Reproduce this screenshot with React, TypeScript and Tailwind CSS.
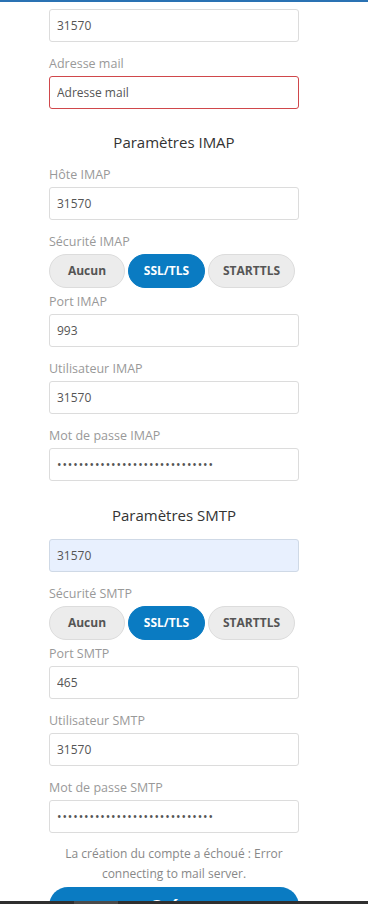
import { useState } from "react";

const font = { fontFamily: '"Open Sans", "Noto Sans", Arial, sans-serif' };

const Label = ({ text, className = "" }: { text: string; className?: string }) => (
  <label className={`block h-[20px] leading-[20px] text-[12.5px] text-[#999] ${className}`}>{text}</label>
);

const Field = ({
  value,
  placeholder,
  type = "text",
  variant = "normal",
  className = "",
}: {
  value?: string;
  placeholder?: string;
  type?: string;
  variant?: "normal" | "error" | "autofill";
  className?: string;
}) => {
  const styles =
    variant === "error"
      ? "border-[#d0474b] bg-white"
      : variant === "autofill"
      ? "border-[#cfd9e6] bg-[#e8f0fe] text-[#222]"
      : "border-[#dcdcdc] bg-white";
  return (
    <input
      readOnly
      type={type}
      value={value}
      placeholder={placeholder}
      className={`block h-[33px] w-full rounded-[3px] border px-[7px] text-[12px] text-[#555] outline-none placeholder:text-[#555] ${
        type === "password" ? "tracking-[0.9px]" : ""
      } ${styles} ${className}`}
      style={font}
    />
  );
};

const Security = ({ active }: { active: string }) => {
  const opts = [
    { name: "Aucun", w: "w-[76px]" },
    { name: "SSL/TLS", w: "w-[77px]" },
    { name: "STARTTLS", w: "w-[87px]" },
  ];
  return (
    <div className="mt-[2px] flex gap-[3px]">
      {opts.map((o) => (
        <button
          key={o.name}
          className={`h-[34px] ${o.w} rounded-full border text-[12px] font-bold ${
            o.name === active
              ? "border-[#0a7bc2] bg-[#0a7bc2] text-white"
              : "border-[#dcdcdc] bg-[#ececec] text-[#555]"
          }`}
          style={font}
        >
          {o.name}
        </button>
      ))}
    </div>
  );
};

export default function App() {
  const [imapSec] = useState("SSL/TLS");
  const [smtpSec] = useState("SSL/TLS");
  const pwd = "abcdefghijklmnopqrstuvwxyzabc";

  return (
    <div className="relative min-h-[904px] w-[368px] overflow-hidden bg-white" style={font}>
      <div className="h-[2px] w-full bg-[#2a72b3]" />
      <div className="ml-[49px] w-[250px] pt-[7px]">
        <Field value="31570" />

        <Label text="Adresse mail" className="mt-[12px]" />
        <Field placeholder="Adresse mail" variant="error" className="mt-[2px]" />

        <h2 className="mt-[21px] h-[24px] text-center text-[15px] leading-[24px] text-[#333]">Paramètres IMAP</h2>

        <Label text="Hôte IMAP" className="mt-[11px]" />
        <Field value="31570" className="mt-[2px]" />

        <Label text="Sécurité IMAP" className="mt-[12px]" />
        <Security active={imapSec} />

        <Label text="Port IMAP" className="mt-[4px]" />
        <Field value="993" className="mt-[2px]" />

        <Label text="Utilisateur IMAP" className="mt-[12px]" />
        <Field value="31570" className="mt-[2px]" />

        <Label text="Mot de passe IMAP" className="mt-[12px]" />
        <Field value={pwd} type="password" className="mt-[2px]" />

        <h2 className="mt-[22px] h-[24px] text-center text-[15px] leading-[24px] text-[#333]">Paramètres SMTP</h2>

        <Field value="31570" variant="autofill" className="mt-[12px]" />

        <Label text="Sécurité SMTP" className="mt-[12px]" />
        <Security active={smtpSec} />

        <Label text="Port SMTP" className="mt-[4px]" />
        <Field value="465" className="mt-[2px]" />

        <Label text="Utilisateur SMTP" className="mt-[12px]" />
        <Field value="31570" className="mt-[2px]" />

        <Label text="Mot de passe SMTP" className="mt-[12px]" />
        <Field value={pwd} type="password" className="mt-[2px]" />

        <p className="mt-[11px] text-center text-[12px] leading-[20px] text-[#888]">
          La création du compte a échoué : Error
          <br />
          connecting to mail server.
        </p>

        <button className="mt-[3px] h-[38px] w-full rounded-[20px] bg-[#0a7bc2] text-[18px] font-bold leading-[38px] text-white">
          Créer
        </button>
      </div>
      <div className="fixed bottom-0 left-0 flex h-[3px] w-[368px] bg-[#2f2f2f]">
        <div className="ml-[74px] h-full w-[44px] bg-[#4a4a4a]" />
      </div>
    </div>
  );
}
